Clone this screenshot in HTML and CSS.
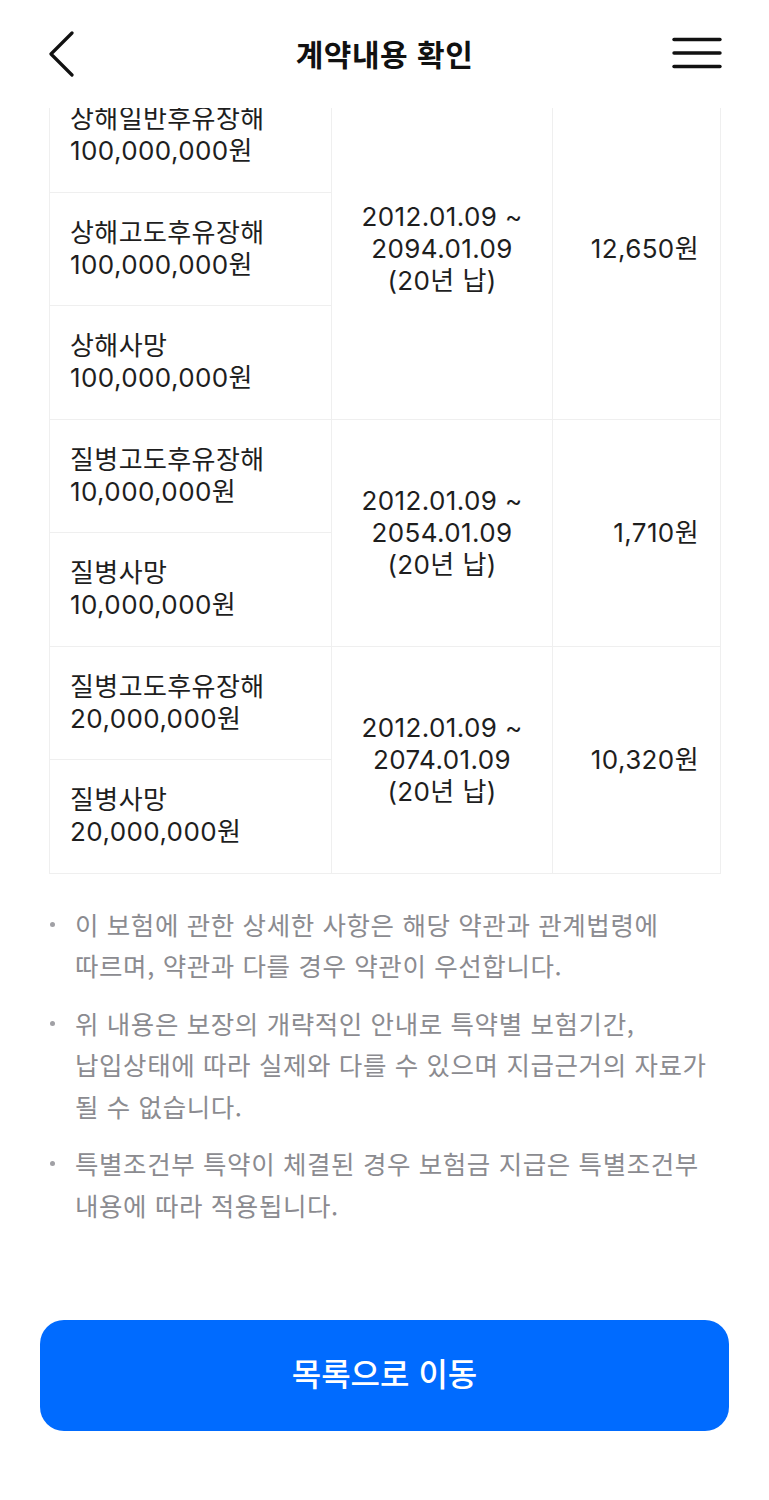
FILE: index.html
```html
<!DOCTYPE html>
<html lang="ko">
<head>
<meta charset="utf-8">
<title>계약내용 확인</title>
<link rel="stylesheet" href="styles.css">
</head>
<body>
<header class="topbar">
  <button class="icon-btn back" aria-label="뒤로">
    <svg width="28" height="48" viewBox="0 0 28 48"><polyline points="24,4 3,25 24,46" fill="none" stroke="#111" stroke-width="3.2" stroke-linecap="round" stroke-linejoin="round"/></svg>
  </button>
  <h1 class="title">계약내용 확인</h1>
  <button class="icon-btn menu" aria-label="메뉴">
    <svg width="50" height="32" viewBox="0 0 50 32"><g stroke="#111" stroke-width="3.4" stroke-linecap="round"><line x1="2" y1="2.5" x2="48" y2="2.5"/><line x1="2" y1="16" x2="48" y2="16"/><line x1="2" y1="29.5" x2="48" y2="29.5"/></g></svg>
  </button>
</header>

<main class="content">
  <table class="coverage">
    <colgroup>
      <col class="c1"><col class="c2"><col class="c3">
    </colgroup>
    <tbody>
      <tr>
        <td class="name">상해일반후유장해<br>100,000,000원</td>
        <td class="period" rowspan="3">2012.01.09 ~<br>2094.01.09<br>(20년 납)</td>
        <td class="premium" rowspan="3">12,650원</td>
      </tr>
      <tr><td class="name">상해고도후유장해<br>100,000,000원</td></tr>
      <tr><td class="name">상해사망<br>100,000,000원</td></tr>
      <tr>
        <td class="name">질병고도후유장해<br>10,000,000원</td>
        <td class="period" rowspan="2">2012.01.09 ~<br>2054.01.09<br>(20년 납)</td>
        <td class="premium" rowspan="2">1,710원</td>
      </tr>
      <tr><td class="name">질병사망<br>10,000,000원</td></tr>
      <tr>
        <td class="name">질병고도후유장해<br>20,000,000원</td>
        <td class="period" rowspan="2">2012.01.09 ~<br>2074.01.09<br>(20년 납)</td>
        <td class="premium" rowspan="2">10,320원</td>
      </tr>
      <tr><td class="name">질병사망<br>20,000,000원</td></tr>
    </tbody>
  </table>

  <ul class="notes">
    <li>이 보험에 관한 상세한 사항은 해당 약관과 관계법령에 따르며, 약관과 다를 경우 약관이 우선합니다.</li>
    <li>위 내용은 보장의 개략적인 안내로 특약별 보험기간, 납입상태에 따라 실제와 다를 수 있으며 지급근거의 자료가 될 수 없습니다.</li>
    <li>특별조건부 특약이 체결된 경우 보험금 지급은 특별조건부 내용에 따라 적용됩니다.</li>
  </ul>

  <div class="actions">
    <button class="primary-btn">목록으로 이동</button>
  </div>
</main>
</body>
</html>
```

FILE: styles.css
```css
* { box-sizing: border-box; }
html, body { margin: 0; padding: 0; background: #fff; }
body {
  font-family: Inter, "Noto Sans CJK KR", sans-serif;
  color: #1e1e1e;
  width: 769px;
}

.topbar {
  position: fixed;
  top: 0; left: 0;
  width: 769px;
  height: 108px;
  background: #fff;
  z-index: 10;
  display: grid;
  grid-template-columns: 1fr auto 1fr;
  align-items: center;
  padding: 0 46px 2px 46px;
}
.icon-btn {
  background: none;
  border: 0;
  padding: 0;
  margin: 0;
  display: flex;
  align-items: center;
  justify-content: center;
}
.back { width: 32px; height: 48px; justify-self: start; }
.menu { width: 52px; height: 34px; justify-self: end; }
.title {
  margin: 0;
  font-family: "Noto Sans CJK KR", sans-serif;
  font-size: 30px;
  font-weight: 700;
  letter-spacing: 0.5px;
  color: #111;
}

.content {
  padding: 78px 49px 0 49px;
}

.coverage {
  width: 671px;
  border-collapse: collapse;
  table-layout: fixed;
  font-size: 26px;
  line-height: 32px;
  letter-spacing: 0.4px;
}
.coverage col.c1 { width: 282px; }
.coverage col.c2 { width: 221px; }
.coverage col.c3 { width: 168px; }
.coverage td {
  border: 1px solid #efefef;
  padding: 24.25px 0;
  vertical-align: middle;
}
.coverage td.name { padding-left: 20px; text-align: left; }
.coverage td.period { text-align: center; }
.coverage td.premium { text-align: right; padding-right: 21px; }

.notes {
  list-style: none;
  margin: 29px 0 0 0;
  padding: 0;
  font-family: "Noto Sans CJK KR", sans-serif;
  font-size: 25.5px;
  line-height: 41.5px;
  letter-spacing: 0.6px;
  color: #8b8b90;
  word-break: keep-all;
}
.notes li {
  position: relative;
  padding-left: 26px;
  margin-bottom: 16px;
}
.notes li::before {
  content: "";
  position: absolute;
  left: 1px;
  top: 19px;
  width: 5px;
  height: 5px;
  border-radius: 50%;
  background: #a0a0a5;
}

.actions {
  margin: 95px -9px 0 -9px;
}
.primary-btn {
  width: 689px;
  height: 111px;
  border: 0;
  border-radius: 24px;
  background: #006bff;
  color: #fff;
  font-family: "Noto Sans CJK KR", sans-serif;
  font-size: 32px;
  font-weight: 500;
  letter-spacing: 0;
  display: flex;
  align-items: center;
  justify-content: center;
  padding: 0 0 7px 0;
}
```
